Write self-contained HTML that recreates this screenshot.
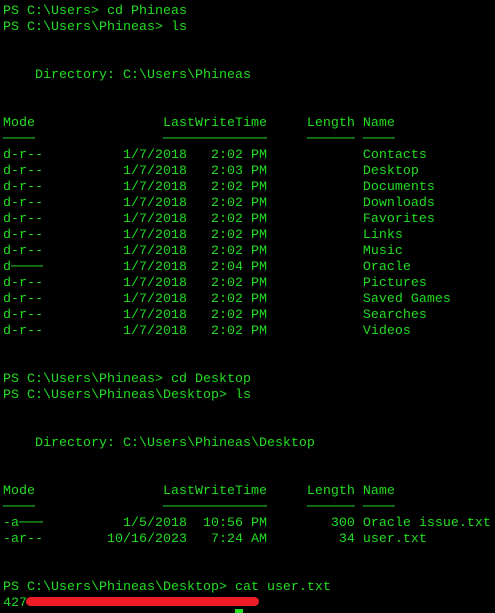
<!DOCTYPE html>
<html><head><style>
html,body{margin:0;padding:0;background:#000;width:495px;height:613px;overflow:hidden}
pre{margin:0;padding:4px 0 0 3px;font-family:"Liberation Mono",monospace;font-size:13.33px;line-height:16px;color:#22dd22;white-space:pre}
.red{position:absolute;left:26px;top:597px;width:233px;height:9px;background:#ee1c25;border-radius:5px}
.cur{position:absolute;left:235px;top:609px;width:8px;height:4px;background:#22dd22}
</style></head><body>
<pre>PS C:\Users&gt; cd Phineas
PS C:\Users\Phineas&gt; ls


    Directory: C:\Users\Phineas


Mode                LastWriteTime     Length Name
────                ─────────────     ────── ────
d-r--          1/7/2018   2:02 PM            Contacts
d-r--          1/7/2018   2:03 PM            Desktop
d-r--          1/7/2018   2:02 PM            Documents
d-r--          1/7/2018   2:02 PM            Downloads
d-r--          1/7/2018   2:02 PM            Favorites
d-r--          1/7/2018   2:02 PM            Links
d-r--          1/7/2018   2:02 PM            Music
d────          1/7/2018   2:04 PM            Oracle
d-r--          1/7/2018   2:02 PM            Pictures
d-r--          1/7/2018   2:02 PM            Saved Games
d-r--          1/7/2018   2:02 PM            Searches
d-r--          1/7/2018   2:02 PM            Videos


PS C:\Users\Phineas&gt; cd Desktop
PS C:\Users\Phineas\Desktop&gt; ls


    Directory: C:\Users\Phineas\Desktop


Mode                LastWriteTime     Length Name
────                ─────────────     ────── ────
-a───          1/5/2018  10:56 PM        300 Oracle issue.txt
-ar--        10/16/2023   7:24 AM         34 user.txt


PS C:\Users\Phineas\Desktop&gt; cat user.txt
427</pre>
<div class="red"></div><div class="cur"></div>
</body></html>
